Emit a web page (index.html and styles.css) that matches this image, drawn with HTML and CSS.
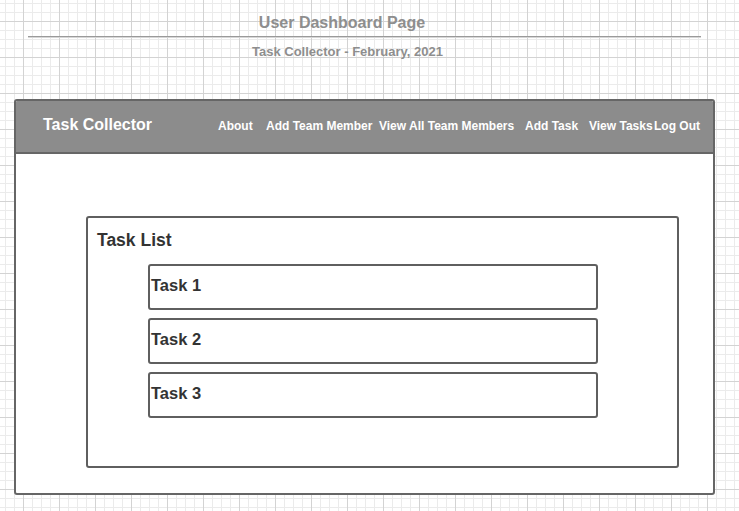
FILE: index.html
```html
<!DOCTYPE html>
<html>
<head>
<meta charset="utf-8">
<link rel="stylesheet" href="styles.css">
</head>
<body>
<div class="page">
  <div class="doc-head">
    <div class="doc-title">User Dashboard Page</div>
    <div class="doc-rule"></div>
    <div class="doc-sub">Task Collector - February, 2021</div>
  </div>
  <div class="frame">
    <div class="navbar">
      <div class="brand">Task Collector</div>
      <nav class="nav">
        <span class="nav-item w-about">About</span>
        <span class="nav-item w-addmember">Add Team Member</span>
        <span class="nav-item w-viewall">View All Team Members</span>
        <span class="nav-item w-addtask">Add Task</span>
        <span class="nav-item w-viewtasks">View Tasks</span>
        <span class="nav-item">Log Out</span>
      </nav>
    </div>
    <div class="content">
      <div class="card">
        <div class="card-title">Task List</div>
        <div class="tasks">
          <div class="task">Task 1</div>
          <div class="task">Task 2</div>
          <div class="task">Task 3</div>
        </div>
      </div>
    </div>
  </div>
</div>
</body>
</html>
```
FILE: styles.css
```css
html, body {
  margin: 0;
  padding: 0;
}
body {
  width: 739px;
  height: 511px;
  overflow: hidden;
  font-family: "Liberation Sans", Arial, sans-serif;
  font-weight: bold;
  background-color: #ffffff;
  background-image:
    linear-gradient(to right, #d3d3d3 1px, transparent 1px),
    linear-gradient(to bottom, #d3d3d3 1px, transparent 1px),
    linear-gradient(to right, #ebebeb 1px, transparent 1px),
    linear-gradient(to bottom, #ebebeb 1px, transparent 1px);
  background-size: 36px 36px, 36px 36px, 9px 9px, 9px 9px;
  background-position: 23px 0, 0 21px, 5px 0, 0 3px;
}
.page {
  display: flex;
  flex-direction: column;
}
.doc-head {
  margin-left: 28px;
  width: 673px;
  padding-top: 14px;
}
.doc-title {
  font-size: 16px;
  line-height: 18px;
  color: #8e8e8e;
  text-align: center;
  padding-right: 45px;
}
.doc-rule {
  margin-top: 4px;
  height: 0;
  border-top: 1px solid #9a9a9a;
  box-shadow: 0 1px 0 #d6d6d6;
}
.doc-sub {
  margin-top: 7px;
  font-size: 13px;
  line-height: 15px;
  color: #8e8e8e;
  text-align: center;
  padding-right: 34px;
}
.frame {
  margin-top: 40px;
  margin-left: 14px;
  width: 701px;
  height: 396px;
  box-sizing: border-box;
  border: 2px solid #666666;
  border-radius: 3px;
  background: #ffffff;
  display: flex;
  flex-direction: column;
  overflow: hidden;
}
.navbar {
  height: 51px;
  background: #8c8c8c;
  border-bottom: 2px solid #666666;
  display: flex;
  align-items: center;
  color: #ffffff;
}
.brand {
  margin-left: 27px;
  width: 175px;
  font-size: 16px;
  padding-bottom: 4px;
}
.nav {
  display: flex;
  font-size: 12px;
  padding-bottom: 2px;
}
.nav-item {
  white-space: nowrap;
}
.w-about { width: 48px; }
.w-addmember { width: 113px; }
.w-viewall { width: 146px; }
.w-addtask { width: 64px; }
.w-viewtasks { width: 65px; }
.content {
  padding-top: 62px;
  padding-left: 70px;
}
.card {
  width: 593px;
  height: 252px;
  box-sizing: border-box;
  border: 2px solid #5f5f5f;
  border-radius: 3px;
  padding: 12px 0 0 9px;
}
.card-title {
  font-size: 17.5px;
  line-height: 20px;
  color: #333333;
}
.tasks {
  margin-top: 14px;
  margin-left: 51px;
  display: flex;
  flex-direction: column;
  gap: 8px;
}
.task {
  width: 450px;
  height: 46px;
  box-sizing: border-box;
  border: 2px solid #5f5f5f;
  border-radius: 3px;
  padding: 10px 0 0 1px;
  font-size: 16.5px;
  line-height: 19px;
  color: #333333;
}
```
